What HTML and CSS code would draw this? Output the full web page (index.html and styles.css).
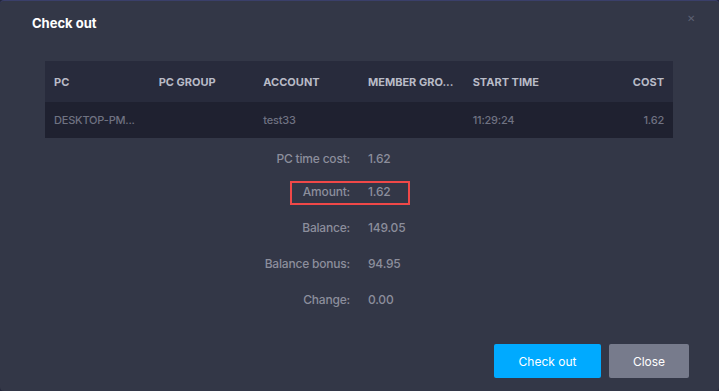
FILE: index.html
```html
<!DOCTYPE html>
<html lang="en">
<head>
    <meta charset="UTF-8">
    <title>Check out</title>
    <link rel="stylesheet" href="styles.css">
</head>
<body>
    <div class="modal">
        <div class="modal-head">
            <h2>Check out</h2>
            <span class="x-btn">&#x2715;</span>
        </div>

        <div class="tbl">
            <div class="tbl-row tbl-head">
                <div>PC</div>
                <div>PC GROUP</div>
                <div>ACCOUNT</div>
                <div>MEMBER GRO...</div>
                <div>START TIME</div>
                <div class="r">COST</div>
            </div>
            <div class="tbl-row tbl-body">
                <div>DESKTOP-PM...</div>
                <div></div>
                <div>test33</div>
                <div></div>
                <div>11:29:24</div>
                <div class="r">1.62</div>
            </div>
        </div>

        <div class="summary">
            <div class="sum-row"><span class="lbl">PC time cost:</span><span class="val">1.62</span></div>
            <div class="sum-row hl"><span class="lbl">Amount:</span><span class="val">1.62</span></div>
            <div class="sum-row"><span class="lbl">Balance:</span><span class="val">149.05</span></div>
            <div class="sum-row"><span class="lbl">Balance bonus:</span><span class="val">94.95</span></div>
            <div class="sum-row"><span class="lbl">Change:</span><span class="val">0.00</span></div>
        </div>

        <div class="modal-foot">
            <button class="btn-ok">Check out</button>
            <button class="btn-close">Close</button>
        </div>
    </div>
</body>
</html>
```

FILE: styles.css
```css
/* checkout dialog */
:root {
    --bg: #23263a; --modal: #333747; --head: #282b3c; --row: #1f2130;
    --blue: #00aaff; --grey: #777b8c; --red: #f04848;
}
html, body { margin: 0; height: 100%; background: var(--bg); }
body { font-family: 'Inter', 'Liberation Sans', sans-serif; color: #e6e8ee; }
.modal { height: 391px; box-sizing: border-box; background: var(--modal); border-top: 1px solid #3a3f6a; border-radius: 4px; padding: 0 30px 0 45px; display: flex; flex-direction: column; }
.modal-head { display: flex; justify-content: space-between; align-items: flex-start; height: 44px; margin-left: -13px; margin-right: -6px; }
.modal-head h2 { margin: 14px 0 0; font-size: 13px; font-weight: 700; color: #fff; }
.x-btn { font-size: 10px; color: #5d6173; margin-top: 11px; }
.tbl { margin-top: 16px; margin-right: 16px; }
.tbl-row { display: grid; grid-template-columns: repeat(6, 1fr); align-items: center; font-size: 11px; }
.tbl-row > div { white-space: nowrap; padding: 0 9px; }
.tbl-row .r { text-align: right; }
.tbl-head { background: var(--head); height: 41px; font-weight: 700; color: #b9bbc7; }
.tbl-body { background: var(--row); height: 36px; color: #6f7282; font-weight: 500; letter-spacing: -0.2px; }
.summary { display: flex; flex-direction: column; margin-top: 5px; }
.sum-row { display: grid; grid-template-columns: 305px 1fr; column-gap: 18px; height: 36px; align-items: center; font-size: 12px; font-weight: 500; color: #8c8e9c; position: relative; letter-spacing: -0.2px; }
.sum-row:first-child { height: 30px; }
.sum-row .lbl { text-align: right; }
.sum-row.hl::after { content: ''; position: absolute; left: 245px; top: 8px; width: 116px; height: 20px; border: 2px solid var(--red); }
.modal-foot { display: flex; justify-content: flex-end; gap: 8px; margin-top: auto; margin-bottom: 13px; }
button { height: 34px; border: none; border-radius: 2px; font-family: 'Inter', 'Liberation Sans', sans-serif; font-size: 12px; color: #fff; cursor: pointer; }
.btn-ok { background: var(--blue); width: 107px; }
.btn-close { background: var(--grey); width: 80px; }
```
